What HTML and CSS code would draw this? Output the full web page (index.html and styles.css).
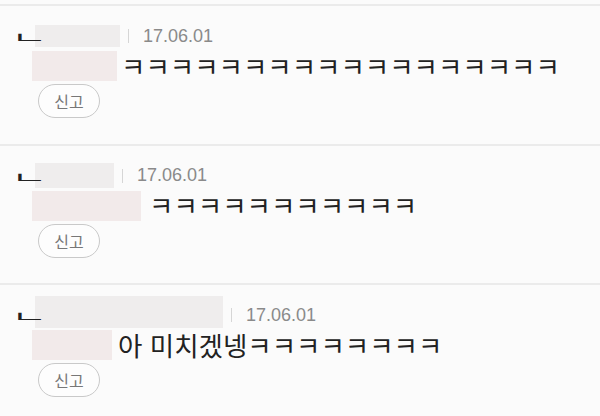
FILE: index.html
```html
<!DOCTYPE html>
<html lang="ko">

<head>
    <meta charset="UTF-8">
    <meta name="viewport" content="width=device-width, initial-scale=1.0">
    <title>댓글</title>
    <link rel="stylesheet" href="styles.css">
</head>

<body>
    <div class="comments">
        <div class="comment">
            <div class="meta">
                <span class="reply-mark">ㄴ</span>
                <span class="blur name-a"></span>
                <span class="bar"></span>
                <span class="date">17.06.01</span>
            </div>
            <div class="body">
                <span class="blur text-a"></span>
                <span class="text">ㅋㅋㅋㅋㅋㅋㅋㅋㅋㅋㅋㅋㅋㅋㅋㅋㅋㅋ</span>
            </div>
            <button type="button" class="report-btn">신고</button>
        </div>

        <div class="comment">
            <div class="meta">
                <span class="reply-mark">ㄴ</span>
                <span class="blur name-b"></span>
                <span class="bar"></span>
                <span class="date">17.06.01</span>
            </div>
            <div class="body">
                <span class="blur text-b"></span>
                <span class="text">ㅋㅋㅋㅋㅋㅋㅋㅋㅋㅋㅋ</span>
            </div>
            <button type="button" class="report-btn">신고</button>
        </div>

        <div class="comment">
            <div class="meta">
                <span class="reply-mark">ㄴ</span>
                <span class="blur name-c"></span>
                <span class="bar"></span>
                <span class="date">17.06.01</span>
            </div>
            <div class="body">
                <span class="blur text-c"></span>
                <span class="text">아 미치겠넹ㅋㅋㅋㅋㅋㅋㅋㅋ</span>
            </div>
            <button type="button" class="report-btn">신고</button>
        </div>
    </div>
</body>

</html>
```

FILE: styles.css
```css
* {
    margin: 0;
    padding: 0;
    box-sizing: border-box;
}

body {
    background: #fbfbfb;
    padding-top: 4px;
    font-family: 'Noto Sans CJK KR', 'Noto Sans', sans-serif;
}

.comment {
    height: 139.5px;
    border-top: 2px solid #ebebeb;
    padding: 15px 0 0 18px;
}

.meta {
    display: flex;
    align-items: center;
    height: 30px;
}

.reply-mark {
    display: inline-block;
    flex: 0 0 24px;
    min-width: 0;
    overflow: visible;
    margin-left: -7px;
    font-size: 22px;
    line-height: 1;
    color: #222;
    transform: scale(1.8, 0.65);
    transform-origin: left center;
}

.blur {
    display: inline-block;
    background: #efeded;
}

.name-a {
    width: 85px;
    height: 22px;
}

.name-b {
    width: 79px;
    height: 25px;
}

.name-c {
    width: 188px;
    height: 32px;
    margin-top: -6px;
}

.bar {
    width: 1px;
    height: 14px;
    background: #d6d6d6;
    margin: 0 14px 0 8px;
}

.date {
    font-family: 'Liberation Sans', Arial, sans-serif;
    font-size: 18px;
    color: #8a8a8a;
}

.body {
    display: flex;
    align-items: center;
    height: 32px;
    margin: -1px 0 0 14px;
}

.text-a,
.text-b,
.text-c {
    height: 30px;
    background: #f2eaea;
    margin-right: 4px;
}

.text-a {
    width: 85px;
}

.text-b {
    width: 109px;
    margin-right: 8px;
}

.text-c {
    width: 80px;
    margin-right: 6px;
}

.text {
    font-size: 26.5px;
    line-height: 1;
    color: #222;
}

.report-btn {
    display: block;
    margin: 2px 0 0 20px;
    width: 62px;
    height: 34px;
    border: 1px solid #c9c9c9;
    border-radius: 17px;
    background: #fdfdfd;
    font-family: 'Noto Sans CJK KR', sans-serif;
    font-size: 16px;
    color: #777;
    cursor: pointer;
}
```
